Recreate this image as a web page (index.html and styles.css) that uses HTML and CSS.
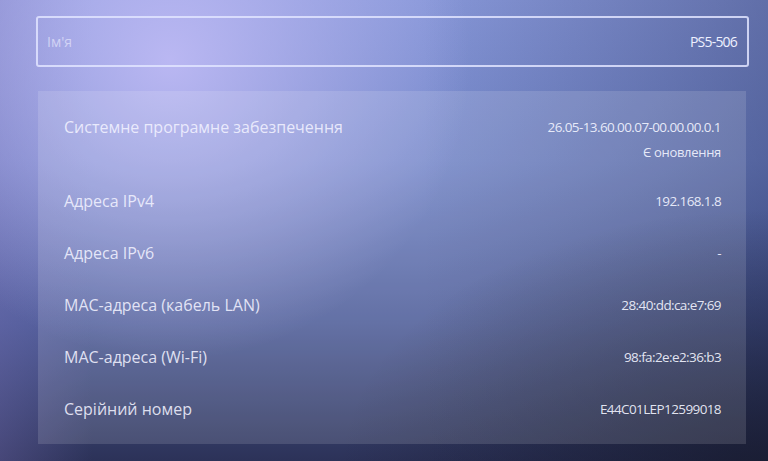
FILE: index.html
```html
<!DOCTYPE html>
<html lang="uk">
<head>
    <meta charset="UTF-8">
    <meta name="viewport" content="width=device-width, initial-scale=1.0">
    <title>Інформація про консоль</title>
    <link rel="stylesheet" href="styles.css">
</head>
<body>

    <div class="screen">
        <!-- Console name field -->
        <div class="name-field">
            <span class="name-label">Ім'я</span>
            <span class="name-value">PS5-506</span>
        </div>

        <!-- System information list -->
        <div class="info-panel">
            <div class="info-row">
                <span class="info-label">Системне програмне забезпечення</span>
                <div class="info-value">
                    <div>26.05-13.60.00.07-00.00.00.0.1</div>
                    <div class="info-note">Є оновлення</div>
                </div>
            </div>
            <div class="info-row">
                <span class="info-label">Адреса IPv4</span>
                <div class="info-value">192.168.1.8</div>
            </div>
            <div class="info-row">
                <span class="info-label">Адреса IPv6</span>
                <div class="info-value">-</div>
            </div>
            <div class="info-row">
                <span class="info-label">MAC-адреса (кабель LAN)</span>
                <div class="info-value">28:40:dd:ca:e7:69</div>
            </div>
            <div class="info-row">
                <span class="info-label">MAC-адреса (Wi-Fi)</span>
                <div class="info-value">98:fa:2e:e2:36:b3</div>
            </div>
            <div class="info-row">
                <span class="info-label">Серійний номер</span>
                <div class="info-value">E44C01LEP12599018</div>
            </div>
        </div>
    </div>

</body>
</html>
```

FILE: styles.css
```css
/* Full screen with the console's blue-lavender backdrop */
body {
    margin: 0;
    height: 461px;
    overflow: hidden;
    font-family: "Open Sans", "Noto Sans", sans-serif;
    color: #eef0ff;
    background:
        radial-gradient(ellipse 300px 300px at 170px 60px, rgba(196, 190, 248, 0.85), rgba(196, 190, 248, 0) 100%),
        radial-gradient(ellipse 420px 260px at 760px 470px, rgba(22, 24, 40, 0.75), rgba(22, 24, 40, 0) 100%),
        linear-gradient(90deg, rgba(120, 110, 180, 0.35) 0%, rgba(0, 0, 0, 0) 12%, rgba(0, 0, 0, 0) 55%, rgba(25, 35, 80, 0.35) 100%),
        linear-gradient(180deg, #8797d8 0%, #7386c8 35%, #4d5c98 70%, #2c3258 100%);
}

.screen {
    padding: 16px 19px 0 36px;
}

/* Name input box */
.name-field {
    height: 47px;
    border: 2px solid rgba(225, 228, 255, 0.85);
    border-radius: 3px;
    display: flex;
    align-items: center;
    justify-content: space-between;
    padding: 0 10px 0 9px;
}

.name-label {
    font-size: 14px;
    color: rgba(240, 240, 255, 0.6);
}

.name-value {
    font-size: 14px;
    letter-spacing: -0.8px;
}

/* Translucent card with rows */
.info-panel {
    margin: 24px 3px 0 2px;
    padding: 10px 25px 9px 26px;
    background-color: rgba(255, 255, 255, 0.13);
}

.info-row {
    display: flex;
    justify-content: space-between;
    align-items: flex-start;
    padding: 16px 0;
    line-height: 20px;
}

.info-label {
    font-size: 16px;
    color: rgba(242, 242, 255, 0.88);
}

.info-value {
    font-size: 13.5px;
    letter-spacing: -0.6px;
    text-align: right;
    color: rgba(242, 244, 255, 0.92);
}

.info-note {
    margin-top: 8px;
    line-height: 14px;
    font-size: 13px;
    letter-spacing: -0.3px;
}
```
